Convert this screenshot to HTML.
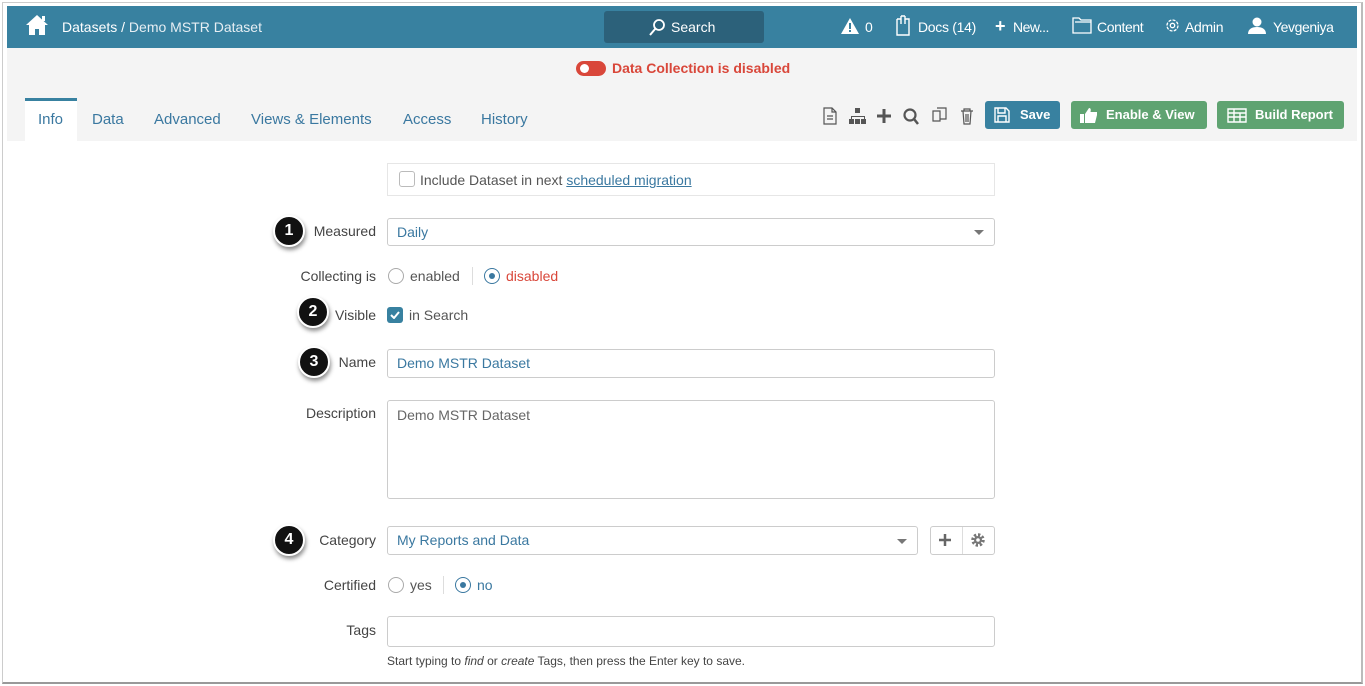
<!DOCTYPE html>
<html><head><meta charset="utf-8"><style>
*{box-sizing:border-box;margin:0;padding:0}
body{width:1365px;height:686px;background:#fff;font-family:"Liberation Sans",sans-serif;position:relative;overflow:hidden;font-size:14px;color:#444}
.frame{position:absolute;left:2px;top:2px;width:1361px;height:682px;border:1px solid #ccc;border-bottom:2px solid #999;border-right:2px solid #bbb}
.hdr{position:absolute;left:7px;top:6px;width:1350px;height:42px;background:#3881a0;color:#fff}
.hdr span{position:absolute;top:13px;font-size:14px}
.gray{position:absolute;left:7px;top:48px;width:1350px;height:93px;background:#f4f4f4}
.abs{position:absolute}
.tab{position:absolute;top:111px;font-size:15px;color:#3a78a0}
.btn{position:absolute;top:101px;height:28px;border-radius:3px;color:#fff;font-weight:bold;font-size:13px;line-height:28px}
.lbl{position:absolute;font-size:14px;color:#444;text-align:right;width:120px;left:256px}
.inp{position:absolute;left:387px;width:608px;border:1px solid #ccc;border-radius:3px;background:#fff;color:#3a78a0;font-size:14px;padding-left:9px}
.num{position:absolute;width:32px;height:32px;border-radius:50%;background:#111;color:#fff;font-weight:bold;font-size:16px;text-align:center;line-height:28px;box-shadow:1px 3px 4px rgba(0,0,0,.45);border:2px solid #fff}
.radio{position:absolute;width:16px;height:16px;border:1px solid #aaa;border-radius:50%}
.radio.on{border-color:#3a78a0}
.radio.on::after{content:"";position:absolute;left:4px;top:4px;width:6px;height:6px;border-radius:50%;background:#3a78a0}
.caret{position:absolute;width:0;height:0;border-left:5px solid transparent;border-right:5px solid transparent;border-top:5px solid #777}
</style></head><body>
<div class="frame"></div>
<div class="hdr">
<svg class="abs" style="left:18px;top:8px" width="24" height="22" viewBox="0 0 24 22"><path d="M12 1L1 11h3v10h6v-6h4v6h6V11h3z" fill="#fff"/><rect x="17" y="2" width="3" height="5" fill="#fff"/></svg>
<span style="left:55px">Datasets / <span style="position:static;color:#e6eef3">Demo MSTR Dataset</span></span>
<div class="abs" style="left:597px;top:5px;width:160px;height:32px;background:#2c617a;border-radius:3px"></div>
<svg class="abs" style="left:642px;top:13px" width="16" height="17" viewBox="0 0 16 17"><circle cx="10" cy="6" r="5" fill="none" stroke="#fff" stroke-width="1.8"/><path d="M6.5 9.5L1 16" stroke="#fff" stroke-width="2"/></svg>
<span style="left:664px">Search</span>
<svg class="abs" style="left:834px;top:12px" width="18" height="16" viewBox="0 0 18 16"><path d="M9 0L18 16H0z" fill="#fff"/><rect x="8" y="5" width="2" height="6" fill="#3881a0"/><rect x="8" y="12" width="2" height="2" fill="#3881a0"/></svg>
<span style="left:858px">0</span>
<svg class="abs" style="left:889px;top:9px" width="14" height="21" viewBox="0 0 14 21"><path d="M1 4h4M9 4h4v16H1V4" fill="none" stroke="#fff" stroke-width="1.4"/><path d="M5 1v8M9 1v8M5 1h4" stroke="#fff" stroke-width="1.4" fill="none"/></svg>
<span style="left:911px;letter-spacing:-0.3px">Docs (14)</span>
<span style="left:988px;font-weight:bold;font-size:18px;top:10px">+</span>
<span style="left:1006px;letter-spacing:-0.5px">New...</span>
<svg class="abs" style="left:1065px;top:11px" width="20" height="17" viewBox="0 0 20 17"><path d="M1 1h6l2 2h10v13H1z M3 5h16" fill="none" stroke="#fff" stroke-width="1.3"/></svg>
<span style="left:1090px;letter-spacing:-0.4px">Content</span>
<svg class="abs" style="left:1157px;top:11px" width="17" height="17" viewBox="0 0 17 17"><circle cx="8.5" cy="8.5" r="5.5" fill="none" stroke="#fff" stroke-width="1.3" stroke-dasharray="3 1.3"/><circle cx="8.5" cy="8.5" r="2.2" fill="none" stroke="#fff" stroke-width="1.3"/></svg>
<span style="left:1178px;letter-spacing:-0.3px">Admin</span>
<svg class="abs" style="left:1241px;top:11px" width="18" height="17" viewBox="0 0 18 17"><circle cx="9" cy="5" r="4.5" fill="#fff"/><path d="M0 17c0-5 4-7 9-7s9 2 9 7z" fill="#fff"/></svg>
<span style="left:1266px;letter-spacing:-0.4px">Yevgeniya</span>
</div>
<div class="gray"></div>
<div class="abs" style="left:576px;top:61px;width:30px;height:15px;border-radius:8px;background:#d9473a"></div>
<div class="abs" style="left:580px;top:64px;width:9px;height:9px;border-radius:50%;background:#fff"></div>
<div class="abs" style="left:612px;top:60px;color:#d9473a;font-weight:bold;font-size:14px">Data Collection is disabled</div>
<div class="abs" style="left:25px;top:98px;width:52px;height:43px;background:#fff;border-top:3px solid #3881a0"></div>
<div class="tab" style="left:38px">Info</div>
<div class="tab" style="left:92px">Data</div>
<div class="tab" style="left:154px">Advanced</div>
<div class="tab" style="left:251px">Views &amp; Elements</div>
<div class="tab" style="left:403px">Access</div>
<div class="tab" style="left:481px">History</div>
<svg class="abs" style="left:822px;top:107px" width="160" height="18" viewBox="0 0 160 18">
<g fill="none" stroke="#555" stroke-width="1.2"><path d="M2 1h8l4 4v12H2z M10 1v4h4 M5 9h6M5 12h6"/></g>
<g fill="#555"><rect x="33" y="1" width="5" height="5"/><rect x="27" y="12" width="5" height="5"/><rect x="33" y="12" width="5" height="5"/><rect x="39" y="12" width="5" height="5"/><path d="M35 6h1v3h-7v3h1v-2h12v2h1V9h-7V6z"/></g>
<path d="M62 2v14M55 9h14" stroke="#555" stroke-width="3"/>
<circle cx="88" cy="8" r="5.5" fill="none" stroke="#555" stroke-width="2.2"/><path d="M92 12l4 5" stroke="#555" stroke-width="2.5"/>
<g fill="none" stroke="#555" stroke-width="1.2"><path d="M111 4h7v10h-7z M115 1h9v11h-6"/></g>
<g fill="none" stroke="#555" stroke-width="1.2"><path d="M139 4h12 M142 4V2h6v2 M141 4l1 13h6l1-13 M144 7v8M146 7v8"/></g>
</svg>
<div class="btn" style="left:985px;width:75px;background:#3881a0;padding-left:35px">Save</div>
<svg class="abs" style="left:994px;top:107px" width="16" height="16" viewBox="0 0 16 16"><path d="M1 1h11l3 3v11H1z M4 1v5h7V1 M4 9h8v6H4z" fill="none" stroke="#fff" stroke-width="1.4"/></svg>
<div class="btn" style="left:1071px;width:136px;background:#5fa371;padding-left:35px">Enable &amp; View</div>
<svg class="abs" style="left:1080px;top:107px" width="18" height="17" viewBox="0 0 18 17"><rect x="0" y="7" width="4" height="9" fill="#fff"/><path d="M5 7l4-6c2 0 2 2 1.5 4H17v3l-2 8H5z" fill="#fff"/></svg>
<div class="btn" style="left:1217px;width:127px;background:#5fa371;padding-left:38px">Build Report</div>
<svg class="abs" style="left:1227px;top:108px" width="20" height="15" viewBox="0 0 20 15"><path d="M1 1h18v13H1z M1 5h18M1 9h18M7 1v13M13 5v9" fill="none" stroke="#fff" stroke-width="1.4"/></svg>

<div class="abs" style="left:387px;top:163px;width:608px;height:33px;border:1px solid #e6e6e6"></div>
<div class="abs" style="left:399px;top:171px;width:16px;height:16px;border:1px solid #bbb;border-radius:3px"></div>
<div class="abs" style="left:420px;top:172px;font-size:14px;color:#555">Include Dataset in next <span style="color:#3a78a0;text-decoration:underline">scheduled migration</span></div>

<div class="num" style="left:273px;top:215px">1</div>
<div class="lbl" style="top:223px">Measured</div>
<div class="inp" style="top:218px;height:28px;line-height:26px">Daily</div>
<div class="caret" style="left:974px;top:230px"></div>

<div class="lbl" style="top:268px">Collecting is</div>
<div class="radio" style="left:388px;top:268px"></div>
<div class="abs" style="left:410px;top:268px;color:#555">enabled</div>
<div class="abs" style="left:472px;top:267px;width:1px;height:18px;background:#ddd"></div>
<div class="radio on" style="left:484px;top:268px"></div>
<div class="abs" style="left:506px;top:268px;color:#d9473a">disabled</div>

<div class="num" style="left:297px;top:296px">2</div>
<div class="lbl" style="top:307px">Visible</div>
<div class="abs" style="left:387px;top:307px;width:16px;height:16px;background:#3881a0;border-radius:3px"></div>
<svg class="abs" style="left:390px;top:311px" width="10" height="8" viewBox="0 0 10 8"><path d="M1 4l3 3 5-6" fill="none" stroke="#fff" stroke-width="2"/></svg>
<div class="abs" style="left:409px;top:307px;color:#555">in Search</div>

<div class="num" style="left:298px;top:346px">3</div>
<div class="lbl" style="top:354px">Name</div>
<div class="inp" style="top:349px;height:29px;line-height:27px">Demo MSTR Dataset</div>

<div class="lbl" style="top:405px">Description</div>
<div class="inp" style="top:400px;height:99px;color:#666;padding-top:6px">Demo MSTR Dataset</div>

<div class="num" style="left:273px;top:524px">4</div>
<div class="lbl" style="top:532px">Category</div>
<div class="inp" style="top:526px;height:29px;line-height:27px;width:531px">My Reports and Data</div>
<div class="caret" style="left:897px;top:539px"></div>
<div class="abs" style="left:930px;top:526px;width:65px;height:29px;border:1px solid #ccc;border-radius:3px"></div>
<div class="abs" style="left:962px;top:527px;width:1px;height:27px;background:#ddd"></div>
<svg class="abs" style="left:938px;top:533px" width="14" height="14"><path d="M7 1v12M1 7h12" stroke="#666" stroke-width="2.5"/></svg>
<svg class="abs" style="left:970px;top:532px" width="16" height="16" viewBox="0 0 16 16"><circle cx="8" cy="8" r="5" fill="none" stroke="#777" stroke-width="3.5" stroke-dasharray="2.2 1.7"/><circle cx="8" cy="8" r="4" fill="#777"/><circle cx="8" cy="8" r="1.8" fill="#fff"/></svg>

<div class="lbl" style="top:577px">Certified</div>
<div class="radio" style="left:388px;top:577px"></div>
<div class="abs" style="left:410px;top:577px;color:#555">yes</div>
<div class="abs" style="left:443px;top:576px;width:1px;height:18px;background:#ddd"></div>
<div class="radio on" style="left:455px;top:577px"></div>
<div class="abs" style="left:477px;top:577px;color:#3a78a0">no</div>

<div class="lbl" style="top:622px">Tags</div>
<div class="inp" style="top:616px;height:31px"></div>
<div class="abs" style="left:387px;top:654px;font-size:12px;color:#444">Start typing to <i>find</i> or <i>create</i> Tags, then press the Enter key to save.</div>
</body></html>
